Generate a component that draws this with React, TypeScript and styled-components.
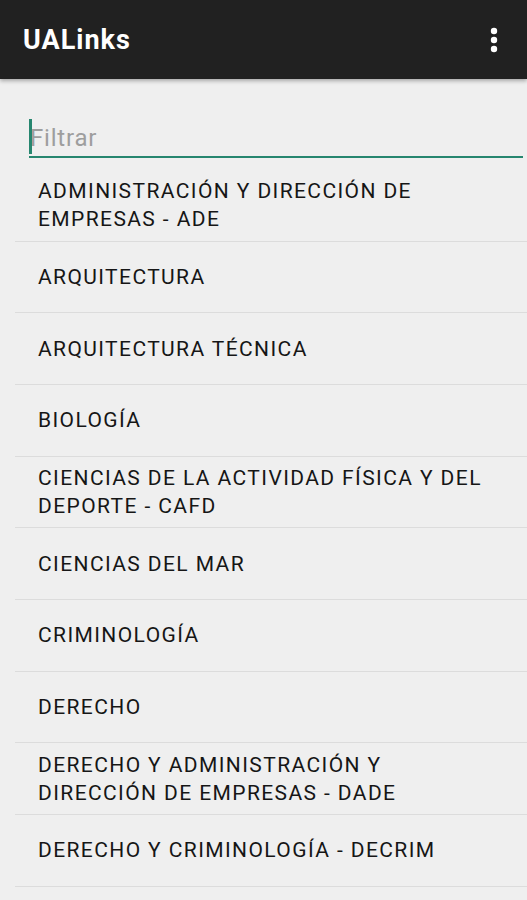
import React from "react";
import styled, { createGlobalStyle } from "styled-components";

const GlobalStyle = createGlobalStyle`
  html, body {
    margin: 0;
    padding: 0;
    background: #efefef;
    font-family: Roboto, "Noto Sans", Arial, sans-serif;
  }
`;

const Screen = styled.div`
  width: 527px;
  min-height: 900px;
  background: #efefef;
  overflow: hidden;
`;

const AppBar = styled.header`
  height: 79px;
  background: #212121;
  display: flex;
  align-items: center;
  justify-content: space-between;
  padding: 0 29px 0 23px;
  box-sizing: border-box;
  box-shadow: 0 2px 4px rgba(0, 0, 0, 0.3);
  position: relative;
`;

const Title = styled.h1`
  margin: 0;
  color: #ffffff;
  font-size: 27px;
  font-weight: 700;
  letter-spacing: 1px;
`;

const MenuButton = styled.button`
  border: none;
  background: none;
  padding: 0;
  display: flex;
  align-items: center;
`;

const FilterWrap = styled.div`
  padding: 38px 4px 0 29px;
  position: relative;
`;

const FilterInput = styled.input`
  display: block;
  width: 100%;
  box-sizing: border-box;
  border: none;
  border-bottom: 2px solid #26866f;
  background: transparent;
  height: 41px;
  padding: 2px 0 0 1px;
  font-family: inherit;
  font-size: 24px;
  letter-spacing: 0.8px;
  color: #212121;
  caret-color: #26866f;
  outline: none;

  &::placeholder {
    color: #9e9e9e;
  }
`;

const Caret = styled.span`
  position: absolute;
  left: 29px;
  top: 40px;
  width: 3px;
  height: 35px;
  background: #26866f;
`;

const List = styled.ul`
  list-style: none;
  margin: 12px 0 0 15px;
  padding: 0;
`;

const Item = styled.li`
  height: 70.67px;
  border-bottom: 1px solid #dcdcdc;
  display: flex;
  align-items: center;
  padding: 0 27px 0 23px;
  font-size: 21px;
  line-height: 28px;
  letter-spacing: 1.4px;
  color: #161616;
  box-sizing: content-box;
`;

const degrees = [
  "ADMINISTRACIÓN Y DIRECCIÓN DE EMPRESAS - ADE",
  "ARQUITECTURA",
  "ARQUITECTURA TÉCNICA",
  "BIOLOGÍA",
  "CIENCIAS DE LA ACTIVIDAD FÍSICA Y DEL DEPORTE - CAFD",
  "CIENCIAS DEL MAR",
  "CRIMINOLOGÍA",
  "DERECHO",
  "DERECHO Y ADMINISTRACIÓN Y DIRECCIÓN DE EMPRESAS - DADE",
  "DERECHO Y CRIMINOLOGÍA - DECRIM",
  "DERECHO Y RELACIONES LABORALES",
];

const DotsIcon = () => (
  <svg width="8" height="26" viewBox="0 0 8 26">
    <circle cx="4" cy="4" r="3.2" fill="#fff" />
    <circle cx="4" cy="13" r="3.2" fill="#fff" />
    <circle cx="4" cy="22" r="3.2" fill="#fff" />
  </svg>
);

export default function App() {
  return (
    <Screen>
      <GlobalStyle />
      <AppBar>
        <Title>UALinks</Title>
        <MenuButton aria-label="Más opciones">
          <DotsIcon />
        </MenuButton>
      </AppBar>
      <FilterWrap>
        <FilterInput placeholder="Filtrar" />
        <Caret />
      </FilterWrap>
      <List>
        {degrees.map((d) => (
          <Item key={d}>{d}</Item>
        ))}
      </List>
    </Screen>
  );
}
